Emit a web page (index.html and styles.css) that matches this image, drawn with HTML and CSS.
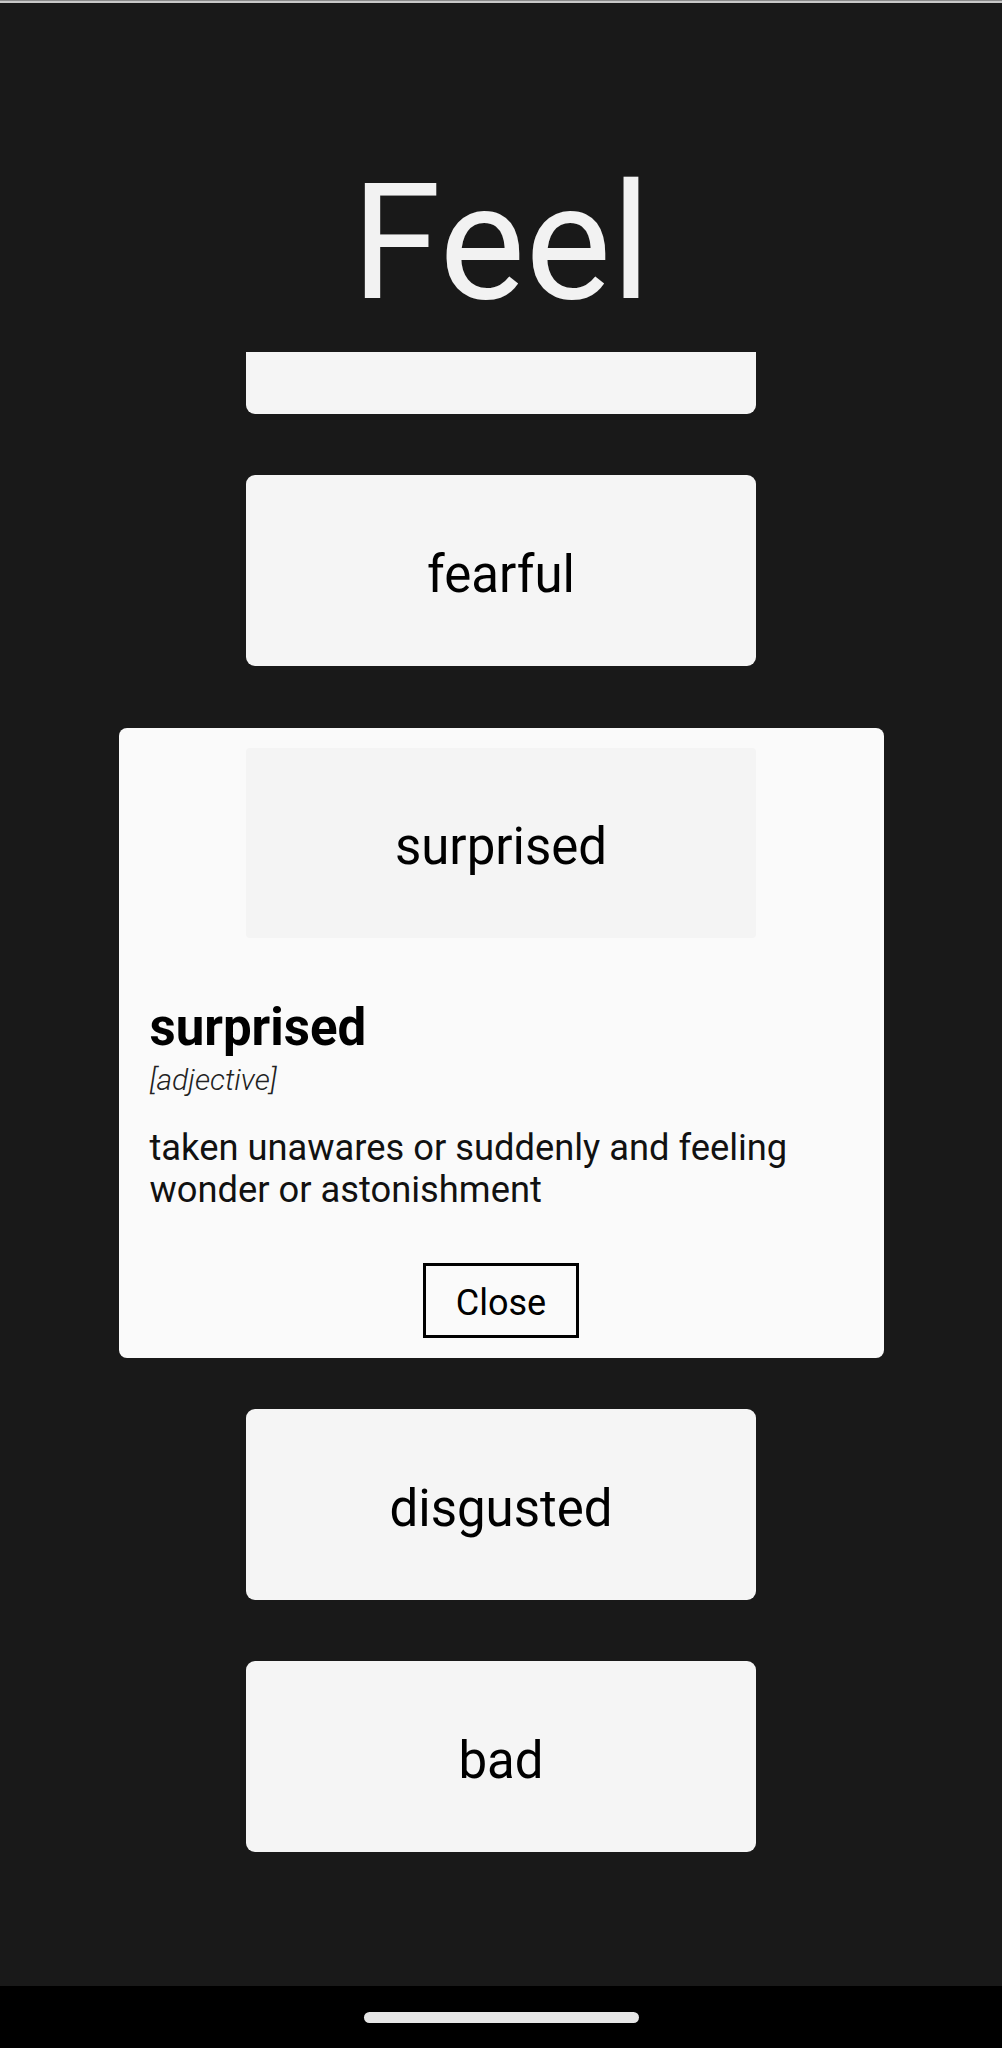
FILE: index.html
```html
<!DOCTYPE html>
<html lang="en">
<head>
<meta charset="utf-8">
<title>Feel</title>
<link rel="stylesheet" href="styles.css">
</head>
<body>
<div class="screen">
  <div class="statusline"></div>
  <header class="header">
    <h1 class="title">Feel</h1>
  </header>
  <main class="list">
    <div class="items">
      <div class="card" aria-hidden="true"></div>
      <div class="card">fearful</div>
      <section class="detail">
        <div class="card card-inner">surprised</div>
        <div class="detail-body">
          <h2 class="word">surprised</h2>
          <div class="pos">[adjective]</div>
          <p class="def">taken unawares or suddenly and feeling wonder or astonishment</p>
          <div class="actions"><button class="close">Close</button></div>
        </div>
      </section>
      <div class="card">disgusted</div>
      <div class="card">bad</div>
    </div>
  </main>
  <nav class="navbar"><div class="handle"></div></nav>
</div>
</body>
</html>
```

FILE: styles.css
```css
* { box-sizing: border-box; }
html, body {
  margin: 0;
  padding: 0;
  background: #191919;
  font-family: Roboto, "Liberation Sans", Arial, sans-serif;
}
.screen {
  width: 1002px;
  height: 2048px;
  display: flex;
  flex-direction: column;
  overflow: hidden;
}
.statusline {
  height: 3px;
  flex: none;
  background: #c8c8c8;
  border-top: 1px solid #8a8a8a;
}
.header {
  height: 349px;
  flex: none;
  padding-top: 159px;
}
.title {
  margin: 0;
  text-align: center;
  font-size: 162px;
  line-height: 162px;
  font-weight: 400;
  color: #f2f2f2;
}
.list {
  flex: 1;
  overflow: hidden;
}
.items {
  display: flex;
  flex-direction: column;
  align-items: center;
  gap: 61px;
  margin-top: -129px;
}
.card {
  width: 510px;
  height: 191px;
  flex: none;
  background: #f5f5f5;
  border-radius: 9px;
  display: flex;
  align-items: center;
  justify-content: center;
  padding-top: 7px;
  font-size: 51px;
  color: #000;
}
.detail {
  width: 765px;
  background: #fafafa;
  border-radius: 8px;
  padding: 20px 0 20px;
  margin-top: 1px;
  margin-bottom: -10px;
  display: flex;
  flex-direction: column;
  align-items: center;
}
.card-inner {
  height: 190px;
  background: #f4f4f4;
  border-radius: 4px;
}
.detail-body {
  align-self: stretch;
  padding: 0 31px;
}
.word {
  margin: 60px 0 0;
  font-size: 51px;
  line-height: 60px;
  font-weight: 700;
  color: #000;
}
.pos {
  margin-top: 2px;
  font-size: 30px;
  line-height: 40px;
  font-style: italic;
  font-weight: 300;
  color: #222;
}
.def {
  margin: 27px 0 0;
  font-size: 36.3px;
  line-height: 42px;
  color: #111;
}
.actions {
  display: flex;
  justify-content: center;
  margin-top: 52px;
}
.close {
  width: 156px;
  height: 75px;
  border: 3px solid #000;
  background: #fafafa;
  border-radius: 0;
  font-family: Roboto, "Liberation Sans", Arial, sans-serif;
  font-size: 36px;
  color: #000;
  padding: 4px 0 0;
  display: flex;
  align-items: center;
  justify-content: center;
}
.navbar {
  height: 62px;
  flex: none;
  background: #000;
  display: flex;
  justify-content: center;
  padding-top: 26px;
}
.handle {
  width: 275px;
  height: 11px;
  border-radius: 6px;
  background: #e6e6e6;
}
```
